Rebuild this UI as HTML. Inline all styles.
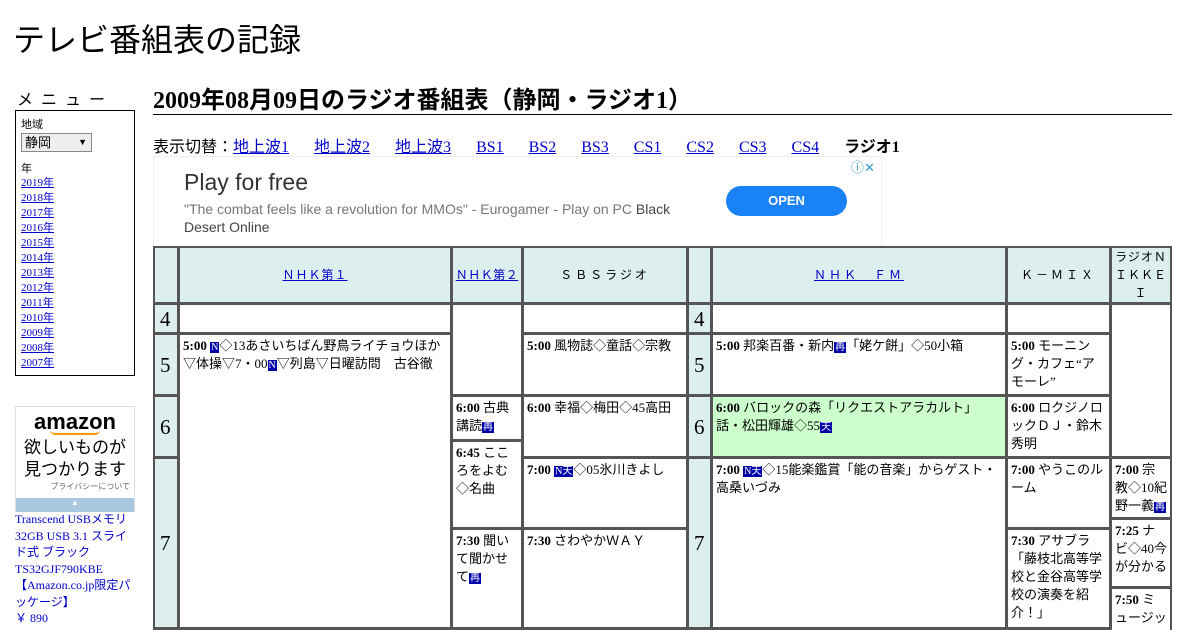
<!DOCTYPE html>
<html><head><meta charset="utf-8"><style>
html,body{margin:0;background:#fff;width:1200px;height:630px;overflow:hidden}
body{font-family:"Liberation Serif","Noto Sans CJK JP",serif;color:#000;position:relative}
.a{position:absolute}
a{color:#00c;text-decoration:underline}
.g{background:#555;}
.c{position:absolute;background:#fff;font-family:"Liberation Serif","Noto Sans CJK JP",serif;font-size:13px;line-height:18px;padding:2px 3px;box-sizing:border-box;overflow:hidden}
.h{background:#ddeeee;text-align:center;font-size:12px;letter-spacing:1px;font-family:"Liberation Sans","Noto Sans CJK JP",sans-serif}
.hr{background:#ddeeee;font-family:"Liberation Serif",serif;font-size:21px;padding:0 0 0 5px;display:flex;align-items:center}
.ic{display:inline-block;background:#00a;color:#fff;font-size:10px;line-height:11px;padding:0 1px}
.menu a{display:block;font-size:11px;line-height:15px}
.nav a{margin-right:25px}
</style></head><body>
<div class="a" style="left:13px;top:15px;font-family:'Liberation Sans','Noto Sans CJK JP',sans-serif;font-size:32px">テレビ番組表の記録</div>
<div class="a" style="left:17px;top:86px;font-family:'Liberation Sans','Noto Sans CJK JP',sans-serif;font-size:16px;letter-spacing:8px">メニュー</div>
<div class="a menu" style="left:15px;top:110px;width:118px;height:264px;border:1px solid #000;font-family:'Liberation Serif','Noto Sans CJK JP',serif;font-size:11px">
<div style="margin:5px 0 0 5px">地域</div>
<div style="margin:1px 0 0 5px;width:66px;height:17px;border:1px solid #888;background:#eee;font-size:13px;line-height:17px;padding-left:3px;position:relative">静岡<span style="position:absolute;right:4px;font-size:9px">▼</span></div>
<div style="margin:8px 0 0 5px">年</div>
<div style="margin-left:5px"><a>2019年</a><a>2018年</a><a>2017年</a><a>2016年</a><a>2015年</a><a>2014年</a><a>2013年</a><a>2012年</a><a>2011年</a><a>2010年</a><a>2009年</a><a>2008年</a><a>2007年</a></div>
</div>
<div class="a" style="left:15px;top:406px;width:118px;height:104px;border:1px solid #ddd;font-family:'Liberation Sans','Noto Sans CJK JP',sans-serif;text-align:center">
<div style="font-size:22px;font-weight:bold;line-height:22px;margin-top:4px">amazon</div>
<div style="width:50px;height:3px;border-bottom:2px solid #f90;border-radius:0 0 20px 20px;margin:-3px auto 0"></div>
<div style="font-size:17px;line-height:22px;margin-top:2px">欲しいものが<br>見つかります</div>
<div style="font-size:8px;color:#666;text-align:right;padding-right:4px">プライバシーについて</div>
<div style="position:absolute;left:0;right:0;bottom:-1px;height:14px;background:#a8c8e0;color:#fff;font-size:8px">▲</div>
</div>
<div class="a" style="left:15px;top:511px;width:120px;font-size:12px;line-height:16.5px;color:#00c">Transcend USBメモリ 32GB USB 3.1 スライド式 ブラック TS32GJF790KBE 【Amazon.co.jp限定パッケージ】<br>￥ 890</div>

<div class="a" style="left:153px;top:80px;font-size:24px;font-weight:bold;white-space:nowrap">2009年08月09日のラジオ番組表（静岡・ラジオ1）</div>
<div class="a" style="left:153px;top:114px;width:1019px;height:1px;background:#000"></div>
<div class="a nav" style="left:153px;top:133px;font-size:16px;white-space:nowrap">表示切替：<a>地上波1</a><a>地上波2</a><a>地上波3</a><a>BS1</a><a>BS2</a><a>BS3</a><a>CS1</a><a>CS2</a><a>CS3</a><a>CS4</a><b>ラジオ1</b></div>
<div class="a" style="left:153px;top:156px;width:727px;height:89px;border:1px solid #eee;font-family:'Liberation Sans',sans-serif">
<div class="a" style="left:30px;top:12px;font-size:23px;color:#333">Play for free</div>
<div class="a" style="left:30px;top:43px;width:490px;font-size:14px;line-height:18px;color:#777">"The combat feels like a revolution for MMOs" - Eurogamer - Play on PC <span style="color:#444">Black Desert Online</span></div>
<div class="a" style="left:572px;top:29px;width:121px;height:30px;border-radius:15px;background:#1a82f7;color:#fff;font-size:13px;font-weight:bold;text-align:center;line-height:30px">OPEN</div>
<div class="a" style="left:697px;top:0;font-size:13px;color:#3399cc">ⓘ✕</div>
</div>

<div class="a g" style="left:153px;top:246px;width:1019px;height:384px"></div>
<div class="c h" style="left:155px;top:248px;width:22px;height:54px"></div>
<div class="c h" style="left:180px;top:248px;width:270px;height:54px;padding-top:18px"><a>ＮＨＫ第１</a></div>
<div class="c h" style="left:453px;top:248px;width:68px;height:54px;padding:18px 0 0 0;letter-spacing:0.5px"><a>ＮＨＫ第２</a></div>
<div class="c h" style="left:524px;top:248px;width:162px;height:54px;padding-top:18px;letter-spacing:3px">ＳＢＳラジオ</div>
<div class="c h" style="left:689px;top:248px;width:21px;height:54px"></div>
<div class="c h" style="left:713px;top:248px;width:292px;height:54px;padding-top:18px;letter-spacing:3px"><a>ＮＨＫ　ＦＭ</a></div>
<div class="c h" style="left:1008px;top:248px;width:101px;height:54px;padding-top:18px;letter-spacing:3px">Ｋ－ＭＩＸ</div>
<div class="c h" style="left:1112px;top:248px;width:58px;height:54px;padding:0;line-height:18px;letter-spacing:1px">ラジオＮＩＫＫＥＩ</div>

<div class="c hr" style="left:155px;top:305px;width:22px;height:27px">4</div>
<div class="c hr" style="left:155px;top:335px;width:22px;height:59px">5</div>
<div class="c hr" style="left:155px;top:397px;width:22px;height:59px">6</div>
<div class="c hr" style="left:155px;top:459px;width:22px;height:168px">7</div>
<div class="c hr" style="left:689px;top:305px;width:21px;height:27px">4</div>
<div class="c hr" style="left:689px;top:335px;width:21px;height:59px">5</div>
<div class="c hr" style="left:689px;top:397px;width:21px;height:59px">6</div>
<div class="c hr" style="left:689px;top:459px;width:21px;height:168px">7</div>

<div class="c" style="left:180px;top:305px;width:270px;height:27px"></div>
<div class="c" style="left:180px;top:335px;width:270px;height:292px"><b>5:00</b> <span class="ic">N</span>◇13あさいちばん野鳥ライチョウほか▽体操▽7・00<span class="ic">N</span>▽列島▽日曜訪問　古谷徹</div>
<div class="c" style="left:453px;top:305px;width:68px;height:89px"></div>
<div class="c" style="left:453px;top:397px;width:68px;height:42px"><b>6:00</b> 古典講読<span class="ic">再</span></div>
<div class="c" style="left:453px;top:442px;width:68px;height:85px"><b>6:45</b> こころをよむ◇名曲</div>
<div class="c" style="left:453px;top:530px;width:68px;height:97px"><b>7:30</b> 聞いて聞かせて<span class="ic">再</span></div>
<div class="c" style="left:524px;top:305px;width:162px;height:27px"></div>
<div class="c" style="left:524px;top:335px;width:162px;height:59px"><b>5:00</b> 風物誌◇童話◇宗教</div>
<div class="c" style="left:524px;top:397px;width:162px;height:59px"><b>6:00</b> 幸福◇梅田◇45高田</div>
<div class="c" style="left:524px;top:459px;width:162px;height:68px"><b>7:00</b> <span class="ic">N天</span>◇05氷川きよし</div>
<div class="c" style="left:524px;top:530px;width:162px;height:97px"><b>7:30</b> さわやかＷＡＹ</div>
<div class="c" style="left:713px;top:305px;width:292px;height:27px"></div>
<div class="c" style="left:713px;top:335px;width:292px;height:59px"><b>5:00</b> 邦楽百番・新内<span class="ic">再</span>「姥ケ餅」◇50小箱</div>
<div class="c" style="left:713px;top:397px;width:292px;height:59px;background:#ccffcc"><b>6:00</b> バロックの森「リクエストアラカルト」話・松田輝雄◇55<span class="ic">天</span></div>
<div class="c" style="left:713px;top:459px;width:292px;height:168px"><b>7:00</b> <span class="ic">N天</span>◇15能楽鑑賞「能の音楽」からゲスト・高桑いづみ</div>
<div class="c" style="left:1008px;top:305px;width:101px;height:27px"></div>
<div class="c" style="left:1008px;top:335px;width:101px;height:59px"><b>5:00</b> モーニング・カフェ“アモーレ”</div>
<div class="c" style="left:1008px;top:397px;width:101px;height:59px"><b>6:00</b> ロクジノロックＤＪ・鈴木秀明</div>
<div class="c" style="left:1008px;top:459px;width:101px;height:68px"><b>7:00</b> やうこのルーム</div>
<div class="c" style="left:1008px;top:530px;width:101px;height:97px"><b>7:30</b> アサブラ「藤枝北高等学校と金谷高等学校の演奏を紹介！」</div>
<div class="c" style="left:1112px;top:305px;width:58px;height:151px"></div>
<div class="c" style="left:1112px;top:459px;width:58px;height:58px;padding:2px 2px 0 3px"><b>7:00</b> 宗教◇10紀野一義<span class="ic">再</span></div>
<div class="c" style="left:1112px;top:520px;width:58px;height:66px;padding:2px 2px 0 3px"><b>7:25</b> ナビ◇40今が分かる</div>
<div class="c" style="left:1112px;top:589px;width:58px;height:60px;padding:2px 2px 0 3px"><b>7:50</b> ミュージッ</div>
</body></html>
